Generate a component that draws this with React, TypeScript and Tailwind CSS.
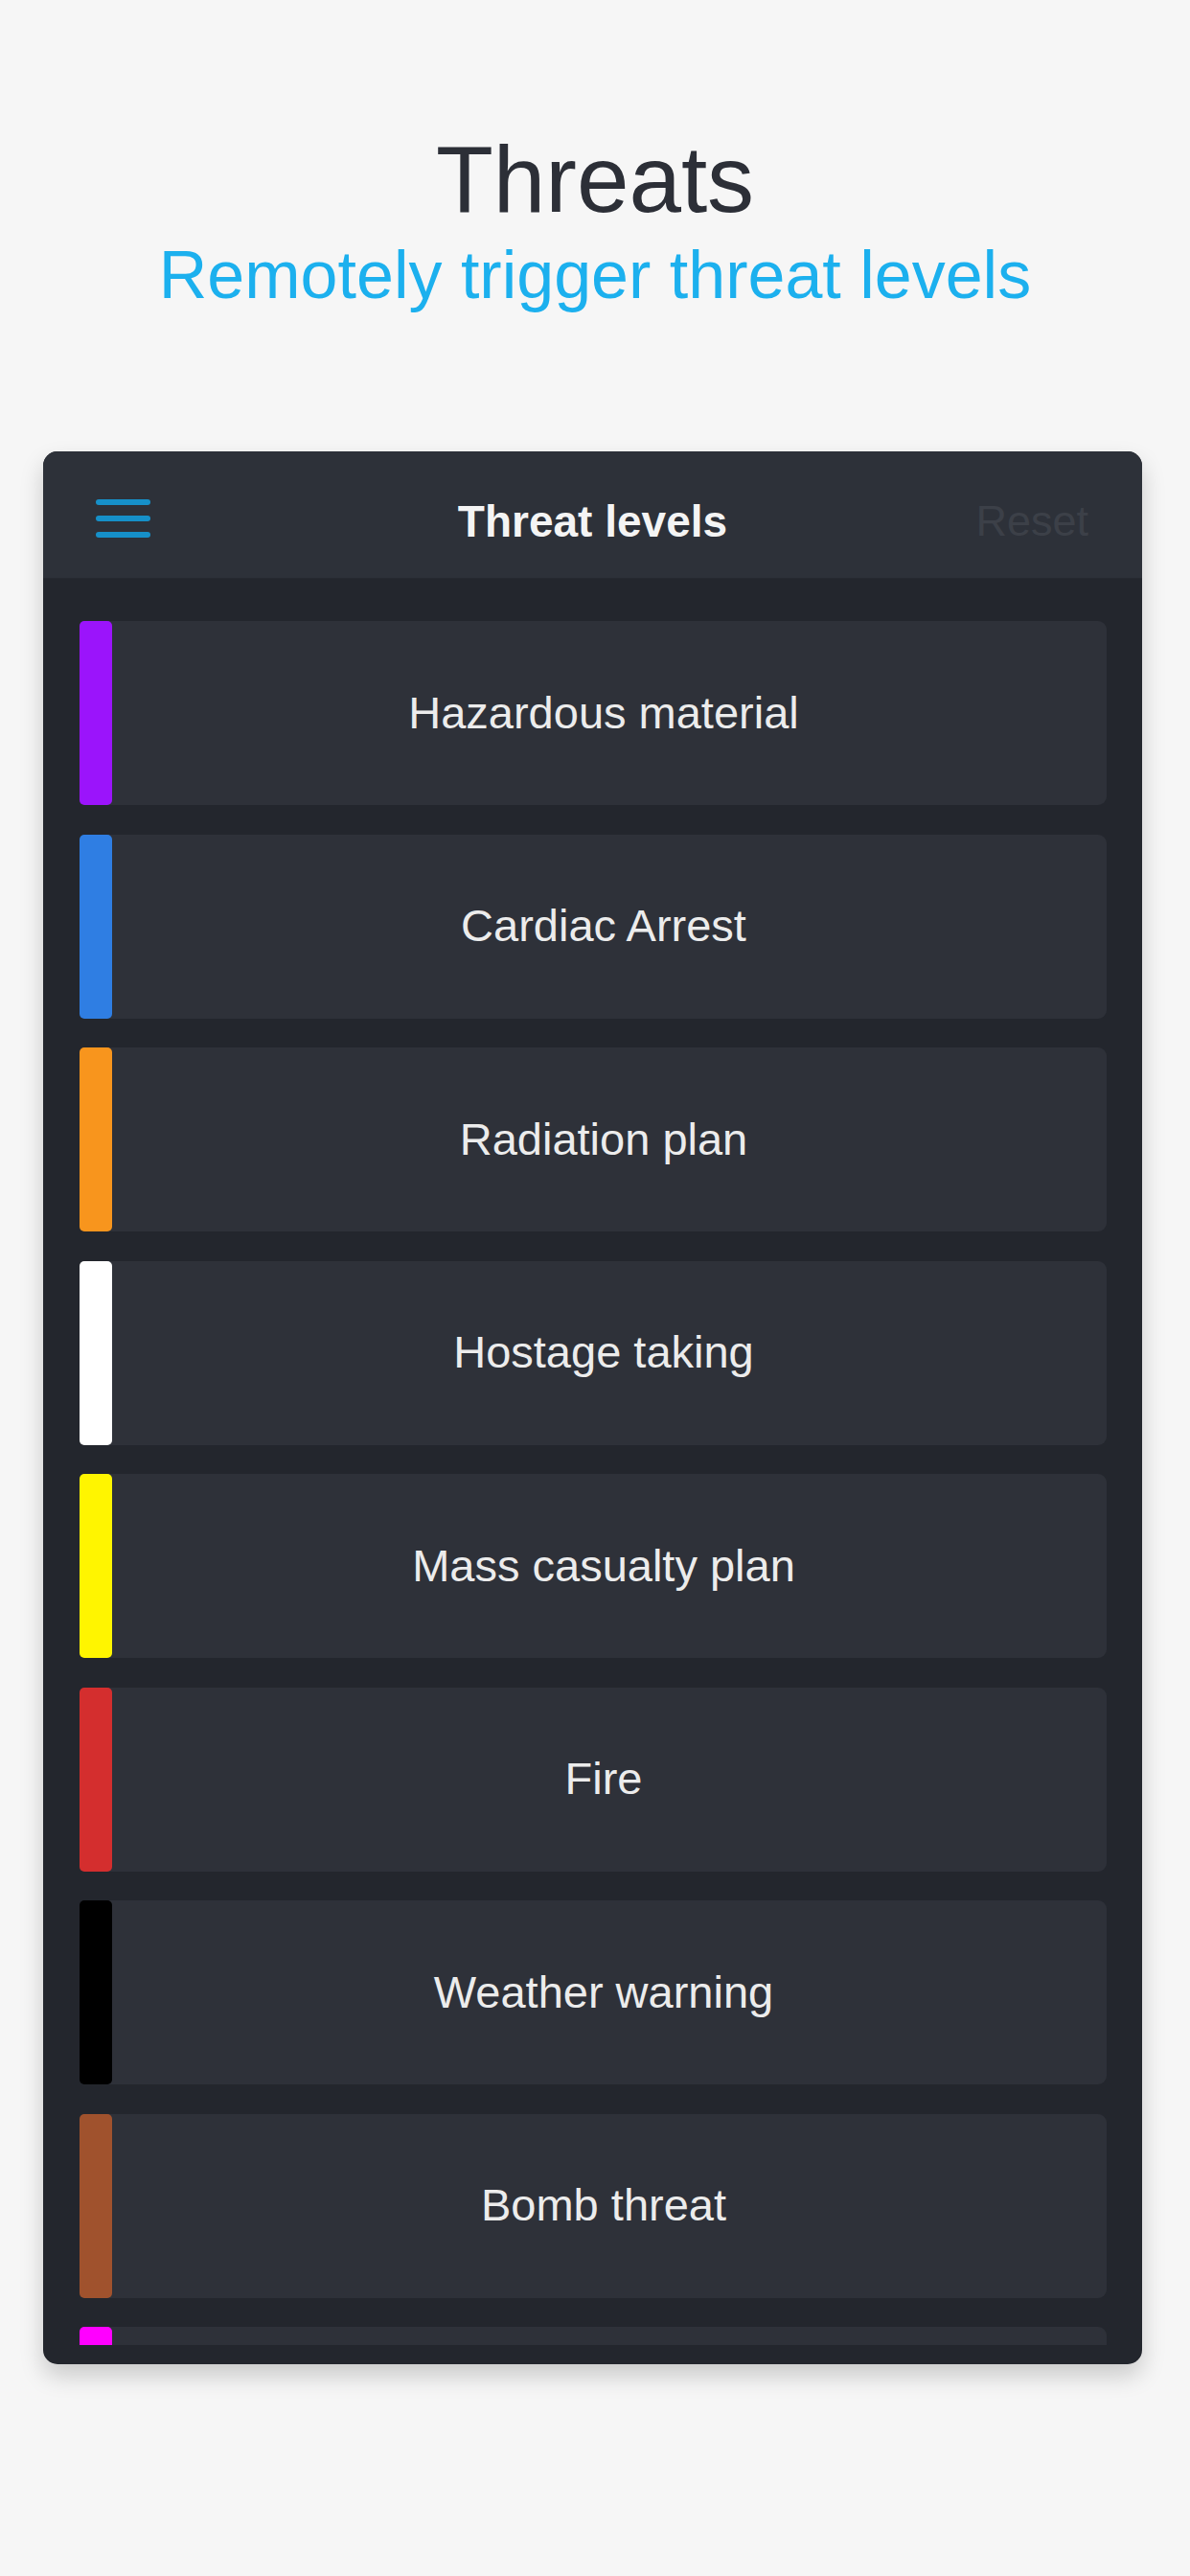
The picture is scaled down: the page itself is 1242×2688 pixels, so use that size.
import React from "react";

const rows = [
  { label: "Hazardous material", bar: "bg-[#9b14fb]" },
  { label: "Cardiac Arrest", bar: "bg-[#2f7ee3]" },
  { label: "Radiation plan", bar: "bg-[#f8951d]" },
  { label: "Hostage taking", bar: "bg-[#ffffff]" },
  { label: "Mass casualty plan", bar: "bg-[#fff500]" },
  { label: "Fire", bar: "bg-[#d42e2e]" },
  { label: "Weather warning", bar: "bg-[#000000]" },
  { label: "Bomb threat", bar: "bg-[#a0522d]" },
  { label: "", bar: "bg-[#ff00ff]" },
];

export default function App() {
  return (
    <div
      className="w-[1242px] h-[2688px] bg-[#f6f6f6] overflow-hidden flex flex-col"
      style={{ fontFamily: '"Liberation Sans", Arial, sans-serif' }}
    >
      <div className="pt-[138px] flex flex-col items-center">
        <h1 className="text-[98px] leading-none font-normal text-[#2c2f37]">
          Threats
        </h1>
        <p className="mt-[16px] text-[70px] leading-none text-[#1cb0ee]">
          Remotely trigger threat levels
        </p>
      </div>

      <div className="mt-[149px] ml-[45px] w-[1147px] h-[1996px] rounded-[15px] bg-[#23262d] overflow-hidden flex flex-col shadow-[0_12px_24px_rgba(0,0,0,0.18)]">
        <div className="relative h-[133px] shrink-0 bg-[#2d3139] border-b border-[#262930] flex items-center justify-between pl-[55px] pr-[56px] pt-[12px]">
          <div className="flex flex-col gap-[11px] w-[57px] -mt-[4px]">
            <span className="block h-[6px] rounded-full bg-[#1690c9]" />
            <span className="block h-[6px] rounded-full bg-[#1690c9]" />
            <span className="block h-[6px] rounded-full bg-[#1690c9]" />
          </div>
          <div className="absolute left-0 right-0 top-0 bottom-0 pt-[14px] flex items-center justify-center pointer-events-none">
            <span className="text-[46px] font-bold text-[#f4f4f4]">
              Threat levels
            </span>
          </div>
          <span className="text-[45px] text-[#3c4048] mt-[2px]">Reset</span>
        </div>

        <div className="flex-1 min-h-0 overflow-hidden pt-[44px] pl-[38px] pr-[37px]">
          <div className="flex flex-col gap-[30.5px]">
            {rows.map((r, i) => (
              <div
                key={i}
                className="h-[192px] shrink-0 flex rounded-[9px] bg-[#2e3139]"
              >
                <div className={`w-[34px] h-full rounded-[5px] ${r.bar}`} />
                <div className="flex-1 flex items-center justify-center pr-[12px]">
                  {r.label && (
                    <span className="text-[47px] text-[#ececec]">{r.label}</span>
                  )}
                </div>
              </div>
            ))}
          </div>
        </div>
        <div className="h-[20px] shrink-0" />
      </div>
    </div>
  );
}
